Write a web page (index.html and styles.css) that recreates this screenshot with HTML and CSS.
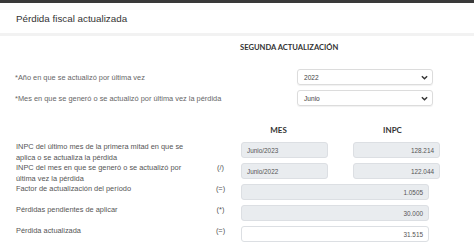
FILE: index.html
```html
<!DOCTYPE html>
<html lang="es">
<head>
<meta charset="utf-8">
<title>Pérdida fiscal actualizada</title>
<link rel="stylesheet" href="styles.css">
</head>
<body>
<div class="topbar"></div>
<header class="panel-head">
  <h1 class="panel-title">Pérdida fiscal actualizada</h1>
</header>
<main class="panel-body">
  <h2 class="section-title">SEGUNDA ACTUALIZACIÓN</h2>

  <div class="select-row">
    <label class="select-label">*Año en que se actualizó por última vez</label>
    <div class="select"><span>2022</span><svg class="chev" viewBox="0 0 8 5" width="7" height="5"><path d="M1 1 L4 4 L7 1" fill="none" stroke="#333" stroke-width="1.6"/></svg></div>
  </div>
  <div class="select-row">
    <label class="select-label">*Mes en que se generó o se actualizó por última vez la pérdida</label>
    <div class="select"><span>Junio</span><svg class="chev" viewBox="0 0 8 5" width="7" height="5"><path d="M1 1 L4 4 L7 1" fill="none" stroke="#333" stroke-width="1.6"/></svg></div>
  </div>

  <div class="calc">
    <div class="col-heads">
      <span class="col-head">MES</span>
      <span class="col-head">INPC</span>
    </div>

    <div class="row">
      <div class="row-label">INPC del último mes de la primera mitad en que se aplica o se actualiza la pérdida</div>
      <div class="op"></div>
      <div class="fields">
        <div class="field ro">Junio/2023</div>
        <div class="field ro num">128.214</div>
      </div>
    </div>
    <div class="row">
      <div class="row-label">INPC del mes en que se generó o se actualizó por última vez la pérdida</div>
      <div class="op">(/)</div>
      <div class="fields">
        <div class="field ro">Junio/2022</div>
        <div class="field ro num">122.044</div>
      </div>
    </div>
    <div class="row">
      <div class="row-label">Factor de actualización del período</div>
      <div class="op">(=)</div>
      <div class="fields">
        <div class="field ro num wide">1.0505</div>
      </div>
    </div>
    <div class="row">
      <div class="row-label">Pérdidas pendientes de aplicar</div>
      <div class="op">(*)</div>
      <div class="fields">
        <div class="field ro num wide">30.000</div>
      </div>
    </div>
    <div class="row">
      <div class="row-label">Pérdida actualizada</div>
      <div class="op">(=)</div>
      <div class="fields">
        <div class="field num wide">31.515</div>
      </div>
    </div>
  </div>
</main>
</body>
</html>
```
FILE: styles.css
```css
* { box-sizing: border-box; }
html, body { margin: 0; padding: 0; background: #fff; }
body {
  font-family: "Liberation Sans", Arial, sans-serif;
  color: #555;
  width: 474px;
  height: 246px;
  overflow: hidden;
}
.topbar { height: 3px; background: #3a3a3a; }
.panel-head {
  height: 33px;
  border-bottom: 3px solid #f2f2f2;
  display: flex;
  align-items: center;
  padding-left: 16px;
}
.panel-title {
  margin: 0;
  font-size: 9.8px;
  font-weight: normal;
  color: #333;
}
.panel-body { padding: 6px 0 0 0; }
.section-title {
  margin: 0 0 17px 240px;
  font-family: Lato, "Liberation Sans", sans-serif;
  font-weight: bold;
  font-size: 7.6px;
  line-height: 10px;
  color: #333;
}
.select-row {
  display: flex;
  align-items: center;
  height: 16px;
  margin-bottom: 5px;
}
.select-label {
  width: 297px;
  padding-left: 15px;
  font-size: 7.4px;
  color: #666;
}
.select {
  width: 136px;
  height: 16px;
  border: 1px solid #dcdcdc;
  border-radius: 3px;
  box-shadow: 0 1px 1px rgba(0,0,0,0.06);
  display: flex;
  align-items: center;
  justify-content: space-between;
  padding: 0 4px 0 6px;
  font-size: 6.6px;
  color: #444;
}
.chev { display: block; }
.calc { margin-top: 19px; padding-left: 16px; }
.col-heads {
  display: flex;
  margin-left: 225px;
  height: 10px;
  margin-bottom: 7px;
}
.col-head {
  width: 112px;
  padding-right: 37px;
  text-align: center;
  font-family: Lato, "Liberation Sans", sans-serif;
  font-weight: bold;
  font-size: 8px;
  line-height: 10px;
  color: #333;
}
.col-head + .col-head { padding-right: 8px; padding-left: 0; width: 87px; }
.row {
  display: grid;
  grid-template-columns: 184px 31px 200px;
  column-gap: 5px;
  min-height: 21px;
  align-items: start;
}
.row-label {
  max-width: 172px;
  font-size: 7.4px;
  line-height: 10.5px;
  color: #555;
}
.op {
  text-align: center;
  font-size: 7.4px;
  line-height: 10.5px;
  color: #555;
}
.fields { display: flex; gap: 25px; }
.field {
  width: 87px;
  height: 16px;
  border: 1px solid #dcdfe3;
  border-radius: 3px;
  display: flex;
  align-items: center;
  padding: 0 5px;
  font-size: 6.4px;
  color: #555;
  background: #fff;
}
.field.ro { background: #e9ecef; }
.field.num { justify-content: flex-end; }
.field.wide { width: 188px; }
```
